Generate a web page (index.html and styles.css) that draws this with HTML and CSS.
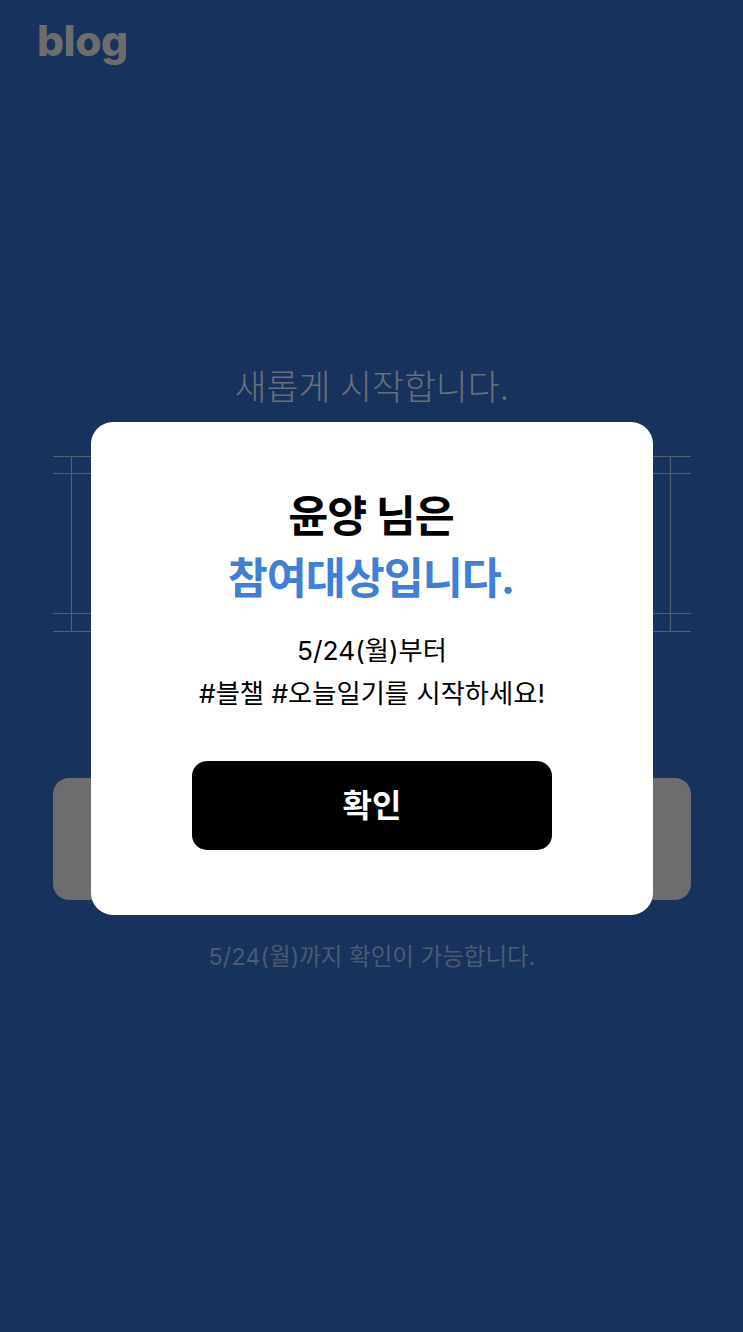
FILE: index.html
```html
<!DOCTYPE html>
<html lang="ko">
<head>
<meta charset="utf-8">
<title>blog</title>
<link rel="stylesheet" href="styles.css">
</head>
<body>
<div class="page">
  <header class="top"><span class="logo">blog</span></header>
  <main class="hero">
    <h1 class="hero-title">새롭게 시작합니다.</h1>
    <svg class="frame" viewBox="0 0 638 176" aria-hidden="true">
      <path d="M0 .5H638M0 17.5H638M0 157.5H638M0 175.5H638M18.5 0V176M617.5 0V176"/>
    </svg>
    <div class="cta"></div>
    <p class="note">5/24(월)까지 확인이 가능합니다.</p>
  </main>
  <div class="overlay">
    <section class="modal">
      <h2 class="modal-title">윤양 님은<br><span class="accent">참여대상입니다.</span></h2>
      <p class="modal-text">5/24(월)부터<br>#블챌 #오늘일기를 시작하세요!</p>
      <button class="ok">확인</button>
    </section>
  </div>
</div>
</body>
</html>
```
FILE: styles.css
```css
* { box-sizing: border-box; }
html, body { margin: 0; padding: 0; }
body {
  background: #17325c;
  font-family: "Inter", "Noto Sans CJK KR", sans-serif;
}
.page {
  position: relative;
  width: 743px;
  height: 1332px;
  overflow: hidden;
  background: #17325c;
}
.top {
  height: 364px;
  padding: 14px 0 0 37px;
}
.logo {
  display: block;
  font-family: "Inter", sans-serif;
  font-weight: 800;
  font-size: 42.5px;
  line-height: 54px;
  letter-spacing: -.5px;
  color: #6d6d6d;
}
.hero {
  padding: 0 52px 0 53px;
  text-align: center;
}
.hero-title {
  margin: 0;
  height: 46px;
  font-size: 34.7px;
  line-height: 46px;
  font-weight: 300;
  color: #6a7079;
}
.frame {
  display: block;
  width: 638px;
  height: 176px;
  margin-top: 46px;
}
.frame path {
  fill: none;
  stroke: #566073;
  stroke-width: 1.2;
}
.cta {
  height: 122px;
  margin-top: 146px;
  border-radius: 16px;
  background: #6d6d6d;
}
.note {
  margin: 40px 0 0;
  font-size: 23.5px;
  line-height: 34px;
  font-weight: 400;
  color: #4c5b72;
}
.overlay {
  position: absolute;
  left: 91px;
  top: 422px;
}
.modal {
  width: 562px;
  height: 493px;
  padding: 63px 0 0;
  border-radius: 22px;
  background: #fff;
  text-align: center;
}
.modal-title {
  margin: 0 2px 0 0;
  font-size: 43.5px;
  line-height: 62px;
  font-weight: 700;
  letter-spacing: -1px;
  color: #000;
}
.accent { color: #3f7fd6; }
.modal-text {
  margin: 20px 0 0;
  font-size: 26.3px;
  line-height: 43px;
  font-weight: 400;
  color: #000;
}
.ok {
  display: block;
  width: 360px;
  height: 89px;
  margin: 46px auto 0;
  padding: 0 0 5px;
  border: 0;
  border-radius: 15px;
  background: #000;
  color: #fff;
  font-family: inherit;
  font-size: 32px;
  font-weight: 700;
}
```
